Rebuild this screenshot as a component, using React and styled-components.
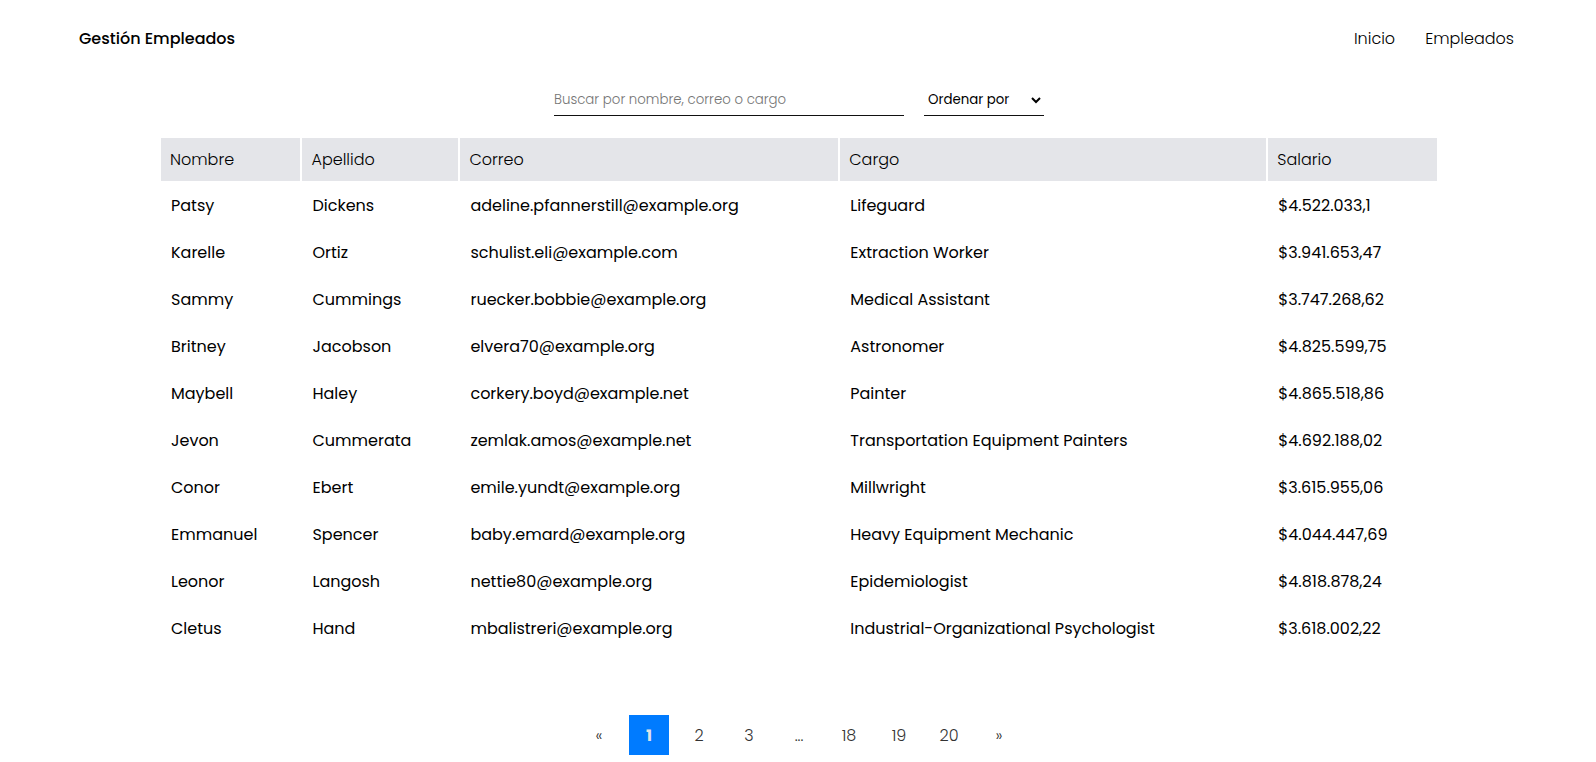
import React, { useState } from "react";
import styled, { createGlobalStyle } from "styled-components";

const GlobalStyle = createGlobalStyle`
  *, *::before, *::after { box-sizing: border-box; }
  body {
    margin: 0;
    background: #fff;
    color: #000;
    font-family: Poppins, Inter, "Liberation Sans", sans-serif;
    font-size: 16px;
    line-height: 24px;
  }
`;

const Header = styled.header`
  display: flex;
  align-items: center;
  justify-content: space-between;
  height: 78px;
  padding: 0 82px 0 79px;
`;

const Brand = styled.a`
  color: #000;
  font-weight: 500;
  text-decoration: none;
`;

const Nav = styled.nav`
  display: flex;
  gap: 30px;
`;

const NavLink = styled.a`
  color: #000;
  font-weight: 300;
  text-decoration: none;
`;

const Main = styled.main`
  display: flex;
  flex-direction: column;
  align-items: center;
  padding-left: 2px;
`;

const Filters = styled.form`
  display: flex;
  justify-content: center;
  gap: 20px;
  width: 100%;
  margin: 6px 0 20px;
`;

const SearchInput = styled.input`
  width: 350px;
  height: 32px;
  padding: 0;
  border: 0;
  border-bottom: 1px solid #111;
  background: transparent;
  font-family: inherit;
  font-weight: 300;

  &::placeholder { color: #757575; }
`;

const SortSelect = styled.select`
  width: 120px;
  height: 32px;
  padding: 0;
  border: 0;
  border-bottom: 1px solid #111;
  background: transparent;
  color: #000;
  font-family: inherit;
  font-weight: 400;
`;

const Table = styled.table`
  width: 90%;
  max-width: 1280px;
  border-collapse: separate;
  border-spacing: 2px;
  table-layout: fixed;
`;

const HeadCell = styled.th`
  width: ${(p) => p.$width};
  height: 43px;
  padding: 0 9px;
  background: #e4e5e9;
  color: #000;
  font-weight: 300;
  text-align: left;
`;

const Cell = styled.td`
  height: 45px;
  padding: 0 10px;
`;

const Pagination = styled.nav`
  display: flex;
  gap: 10px;
  margin: 62px 0 7px;
`;

const PageButton = styled.button`
  width: 40px;
  height: 40px;
  padding: 0;
  border: 0;
  background: ${(p) => (p.$active ? "#007bff" : "transparent")};
  color: ${(p) => (p.$active ? "#dfe3e8" : "#333")};
  font-family: inherit;
  font-size: 16px;
  font-weight: ${(p) => (p.$active ? 700 : 300)};
  cursor: pointer;
`;

const columns = [
  { label: "Nombre", width: "11%" },
  { label: "Apellido", width: "12.3%" },
  { label: "Correo", width: "29.8%" },
  { label: "Cargo", width: "33.6%" },
  { label: "Salario", width: "13.3%" },
];

const employees = [
  ["Patsy", "Dickens", "adeline.pfannerstill@example.org", "Lifeguard", "$4.522.033,1"],
  ["Karelle", "Ortiz", "schulist.eli@example.com", "Extraction Worker", "$3.941.653,47"],
  ["Sammy", "Cummings", "ruecker.bobbie@example.org", "Medical Assistant", "$3.747.268,62"],
  ["Britney", "Jacobson", "elvera70@example.org", "Astronomer", "$4.825.599,75"],
  ["Maybell", "Haley", "corkery.boyd@example.net", "Painter", "$4.865.518,86"],
  ["Jevon", "Cummerata", "zemlak.amos@example.net", "Transportation Equipment Painters", "$4.692.188,02"],
  ["Conor", "Ebert", "emile.yundt@example.org", "Millwright", "$3.615.955,06"],
  ["Emmanuel", "Spencer", "baby.emard@example.org", "Heavy Equipment Mechanic", "$4.044.447,69"],
  ["Leonor", "Langosh", "nettie80@example.org", "Epidemiologist", "$4.818.878,24"],
  ["Cletus", "Hand", "mbalistreri@example.org", "Industrial-Organizational Psychologist", "$3.618.002,22"],
];

const pages = ["«", "1", "2", "3", "...", "18", "19", "20", "»"];

export default function App() {
  const [search, setSearch] = useState("");
  const [page, setPage] = useState("1");

  return (
    <>
      <GlobalStyle />
      <Header>
        <Brand href="#inicio">Gestión Empleados</Brand>
        <Nav>
          <NavLink href="#inicio">Inicio</NavLink>
          <NavLink href="#empleados">Empleados</NavLink>
        </Nav>
      </Header>
      <Main>
        <Filters onSubmit={(e) => e.preventDefault()}>
          <SearchInput
            type="text"
            aria-label="Buscar empleados"
            placeholder="Buscar por nombre, correo o cargo"
            value={search}
            onChange={(e) => setSearch(e.target.value)}
          />
          <SortSelect aria-label="Ordenar por" defaultValue="">
            <option value="">Ordenar por</option>
            <option value="nombre">Nombre</option>
            <option value="apellido">Apellido</option>
            <option value="salario">Salario</option>
          </SortSelect>
        </Filters>
        <Table>
          <thead>
            <tr>
              {columns.map((c) => (
                <HeadCell key={c.label} scope="col" $width={c.width}>{c.label}</HeadCell>
              ))}
            </tr>
          </thead>
          <tbody>
            {employees.map((row) => (
              <tr key={row[2]}>
                {row.map((value) => <Cell key={value}>{value}</Cell>)}
              </tr>
            ))}
          </tbody>
        </Table>
        <Pagination aria-label="Paginación">
          {pages.map((p) => (
            <PageButton
              key={p}
              type="button"
              $active={p === page}
              aria-current={p === page ? "page" : undefined}
              onClick={() => /^\d+$/.test(p) && setPage(p)}
            >
              {p}
            </PageButton>
          ))}
        </Pagination>
      </Main>
    </>
  );
}
